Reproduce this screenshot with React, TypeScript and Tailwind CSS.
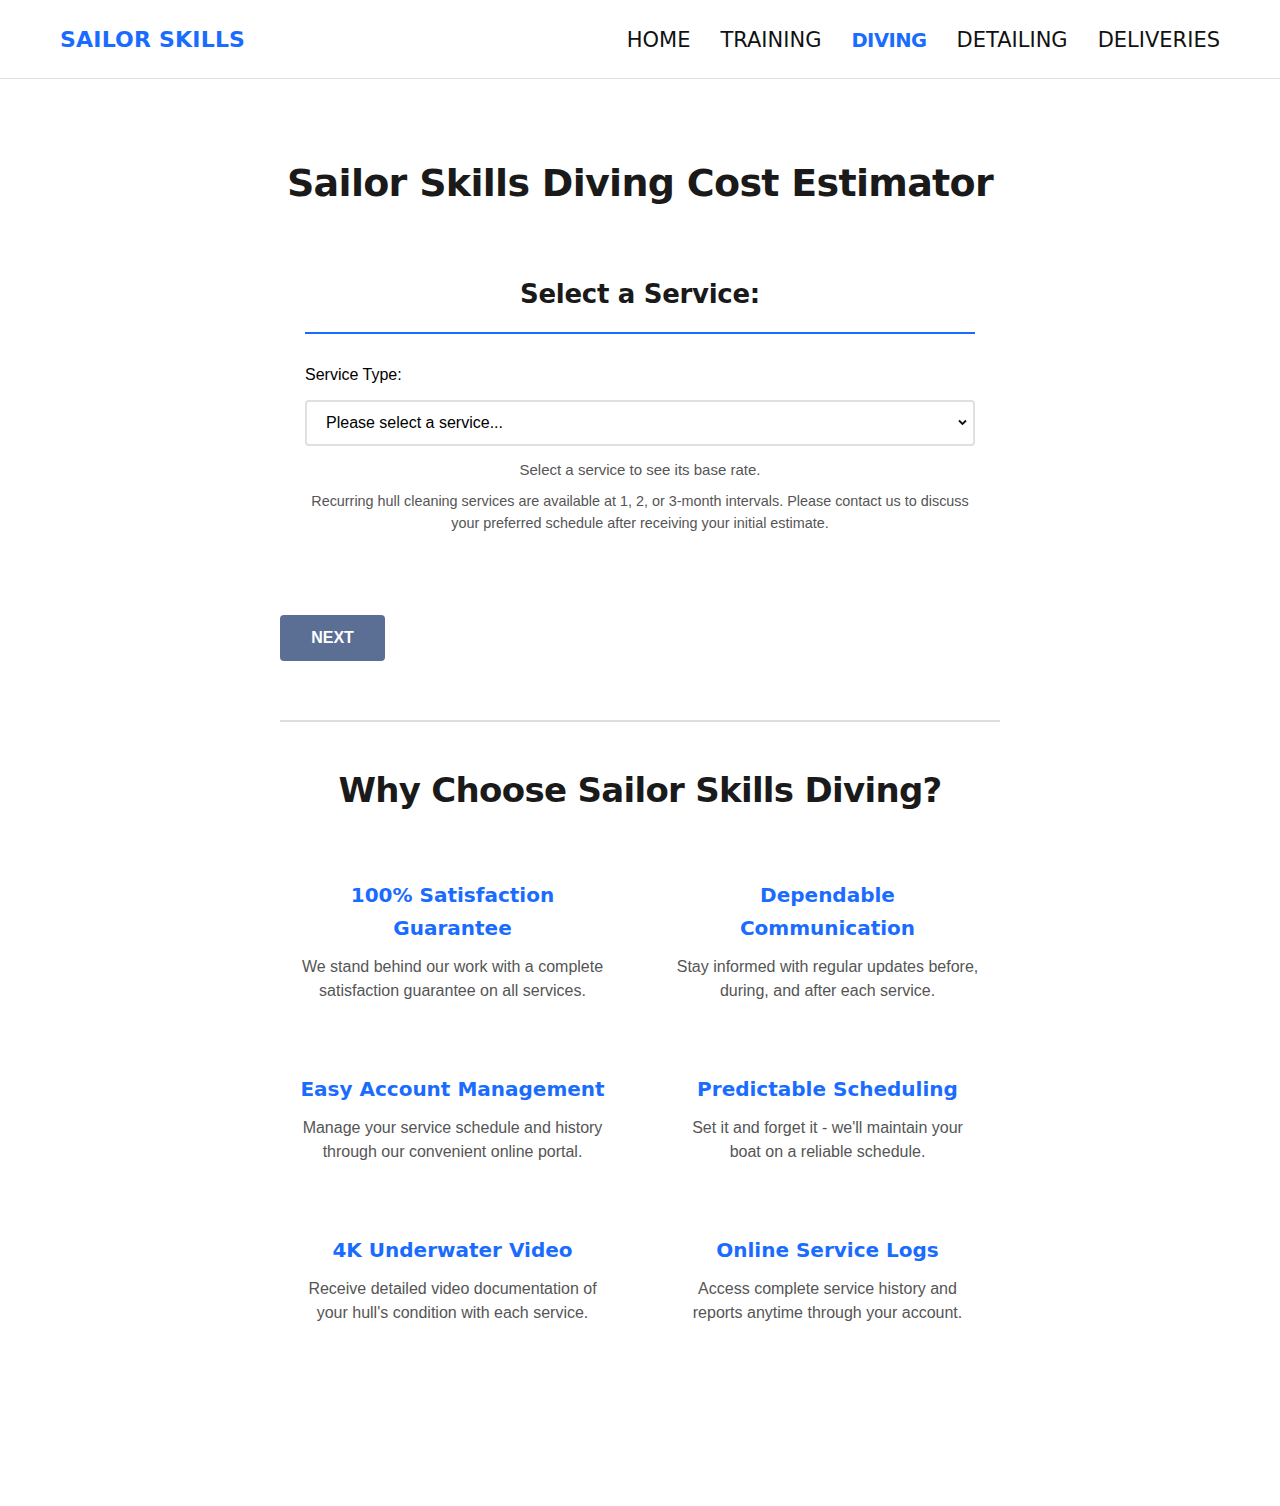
import React from "react";

const heading = { fontFamily: '"DejaVu Sans", "Open Sans", sans-serif' };
const body = { fontFamily: '"Liberation Sans", Arial, sans-serif' };

const navLinks = [
  { label: "HOME", active: false },
  { label: "TRAINING", active: false },
  { label: "DIVING", active: true },
  { label: "DETAILING", active: false },
  { label: "DELIVERIES", active: false },
];

const features = [
  {
    title: "100% Satisfaction Guarantee",
    text: "We stand behind our work with a complete satisfaction guarantee on all services.",
  },
  {
    title: "Dependable Communication",
    text: "Stay informed with regular updates before, during, and after each service.",
  },
  {
    title: "Easy Account Management",
    text: "Manage your service schedule and history through our convenient online portal.",
  },
  {
    title: "Predictable Scheduling",
    text: "Set it and forget it - we'll maintain your boat on a reliable schedule.",
  },
  {
    title: "4K Underwater Video",
    text: "Receive detailed video documentation of your hull's condition with each service.",
  },
  {
    title: "Online Service Logs",
    text: "Access complete service history and reports anytime through your account.",
  },
];

const Header: React.FC = () => (
  <header className="h-[79px] border-b border-[#e3e3e3] flex items-center justify-between px-[60px] bg-white">
    <a href="#" style={heading} className="text-[22px] font-bold text-[#1a6cff] tracking-[0.2px]">
      SAILOR SKILLS
    </a>
    <nav className="flex items-baseline gap-[30px] mt-[4px]" style={heading}>
      {navLinks.map((link) => (
        <a
          key={link.label}
          href="#"
          className={
            link.active
              ? "text-[19.5px] font-bold text-[#1a6cff] tracking-[-0.5px]"
              : "text-[21px] font-normal text-[#111]"
          }
        >
          {link.label}
        </a>
      ))}
    </nav>
  </header>
);

const Estimator: React.FC = () => (
  <section className="w-[720px] mx-auto">
    <h1
      style={heading}
      className="text-[38px] leading-[48px] font-bold text-[#1a1a1a] text-center whitespace-nowrap tracking-[-0.7px]"
    >
      Sailor Skills Diving Cost Estimator
    </h1>

    <div className="px-[25px] mt-[70px]">
      <h2
        style={heading}
        className="text-[26px] leading-[34px] font-bold text-[#1a1a1a] text-center pb-[21px] border-b-2 border-[#1a6cff] tracking-[-0.3px]"
      >
        Select a Service:
      </h2>

      <label style={body} className="block mt-[31px] text-[16px] leading-[19px] text-black">
        Service Type:
      </label>
      <div className="relative mt-[16px]">
        <select
          style={body}
          className="w-full h-[46px] appearance-none border-2 border-[#e0e0e0] rounded-[4px] bg-white pl-[19px] text-[16px] text-black"
        >
          <option>Please select a service...</option>
        </select>
        <svg
          className="absolute right-[8px] top-[19px] pointer-events-none"
          width="9"
          height="7"
          viewBox="0 0 9 7"
        >
          <path d="M1 1.5 L4.5 5 L8 1.5" fill="none" stroke="#111" strokeWidth="1.8" />
        </svg>
      </div>

      <p style={body} className="mt-[15px] text-center text-[15px] leading-[18px] text-[#555]">
        Select a service to see its base rate.
      </p>
      <p style={body} className="mt-[11px] text-center text-[14.4px] leading-[22px] text-[#555]">
        Recurring hull cleaning services are available at 1, 2, or 3-month intervals. Please contact us to discuss
        your preferred schedule after receiving your initial estimate.
      </p>
    </div>

    <button
      style={body}
      className="mt-[81px] w-[105px] h-[46px] rounded-[4px] bg-[#5b6f95] text-white text-[16px] font-semibold"
    >
      NEXT
    </button>

    <hr className="mt-[59px] border-0 border-t-2 border-[#dddddd]" />
  </section>
);

const WhyChoose: React.FC = () => (
  <section className="w-[720px] mx-auto pt-[46px] pb-[160px]">
    <h2
      style={heading}
      className="text-[34px] leading-[44px] font-bold text-[#1a1a1a] text-center tracking-[-0.7px]"
    >
      Why Choose Sailor Skills Diving?
    </h2>
    <div className="grid grid-cols-2 gap-x-[30px] gap-y-[30px] mt-[47px]">
      {features.map((feature) => (
        <div key={feature.title} className="p-[20px] text-center">
          <h3 style={heading} className="text-[20px] leading-[33px] font-bold text-[#1a6cff] mb-[10px]">
            {feature.title}
          </h3>
          <p style={body} className="text-[16px] leading-[24px] text-[#555]">
            {feature.text}
          </p>
        </div>
      ))}
    </div>
  </section>
);

const App: React.FC = () => {
  return (
    <div className="min-h-[1506px] bg-white">
      <Header />
      <main className="pt-[80px]">
        <Estimator />
        <WhyChoose />
      </main>
    </div>
  );
};

export default App;
